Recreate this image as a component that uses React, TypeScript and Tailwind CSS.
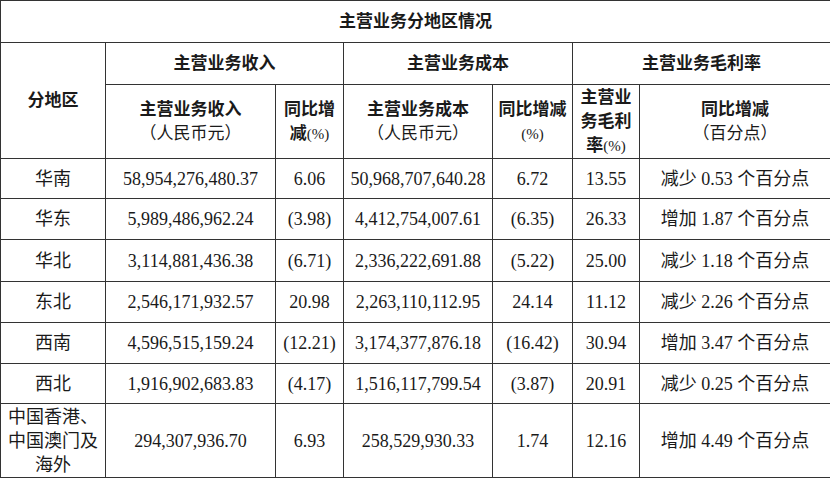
const rows: [string, string, string, string, string, string, string][] = [
  ["华南", "58,954,276,480.37", "6.06", "50,968,707,640.28", "6.72", "13.55", "减少 0.53 个百分点"],
  ["华东", "5,989,486,962.24", "(3.98)", "4,412,754,007.61", "(6.35)", "26.33", "增加 1.87 个百分点"],
  ["华北", "3,114,881,436.38", "(6.71)", "2,336,222,691.88", "(5.22)", "25.00", "减少 1.18 个百分点"],
  ["东北", "2,546,171,932.57", "20.98", "2,263,110,112.95", "24.14", "11.12", "减少 2.26 个百分点"],
  ["西南", "4,596,515,159.24", "(12.21)", "3,174,377,876.18", "(16.42)", "30.94", "增加 3.47 个百分点"],
  ["西北", "1,916,902,683.83", "(4.17)", "1,516,117,799.54", "(3.87)", "20.91", "减少 0.25 个百分点"],
];

const rowHeights = ["h-[40px]", "h-[41px]", "h-[42px]", "h-[41px]", "h-[41px]", "h-[40px]"];

const cell = "border border-[#333] text-center align-middle p-0";
const bodyCell = `${cell} text-[18px]`;

function Pct() {
  return <span className="font-normal text-[15px]">(%)</span>;
}

export default function App() {
  return (
    <div className="w-[830px] h-[478px] bg-white overflow-hidden">
      <table
        className="table-fixed border-collapse w-[830px] text-[#1a1a1a] text-[17px] leading-[24px]"
        style={{ fontFamily: '"Liberation Serif", "Noto Sans CJK SC", serif' }}
      >
        <colgroup>
          <col className="w-[105px]" />
          <col className="w-[170px]" />
          <col className="w-[68px]" />
          <col className="w-[149px]" />
          <col className="w-[80px]" />
          <col className="w-[67px]" />
          <col className="w-[191px]" />
        </colgroup>
        <thead className="font-bold">
          <tr className="h-[42px]">
            <th colSpan={7} className={cell}>主营业务分地区情况</th>
          </tr>
          <tr className="h-[42px]">
            <th rowSpan={2} className={cell}>分地区</th>
            <th colSpan={2} className={cell}>主营业务收入</th>
            <th colSpan={2} className={cell}>主营业务成本</th>
            <th colSpan={2} className={cell}>主营业务毛利率</th>
          </tr>
          <tr className="h-[74px]">
            <th className={cell}>
              主营业务收入
              <br />
              <span className="font-normal">（人民币元）</span>
            </th>
            <th className={cell}>
              同比增
              <br />
              减<Pct />
            </th>
            <th className={cell}>
              主营业务成本
              <br />
              <span className="font-normal">（人民币元）</span>
            </th>
            <th className={cell}>
              同比增减
              <br />
              <Pct />
            </th>
            <th className={cell}>
              主营业
              <br />
              务毛利
              <br />
              率<Pct />
            </th>
            <th className={cell}>
              同比增减
              <br />
              <span className="font-normal">（百分点）</span>
            </th>
          </tr>
        </thead>
        <tbody>
          {rows.map((r, i) => (
            <tr key={r[0]} className={rowHeights[i]}>
              {r.map((v, j) => (
                <td key={j} className={bodyCell}>{v}</td>
              ))}
            </tr>
          ))}
          <tr className="h-[74px]">
            <td className={`${bodyCell} leading-[24px]`}>
              <div className="flex flex-col items-center">
                <span>中国香港、</span>
                <span>中国澳门及</span>
                <span>海外</span>
              </div>
            </td>
            <td className={bodyCell}>294,307,936.70</td>
            <td className={bodyCell}>6.93</td>
            <td className={bodyCell}>258,529,930.33</td>
            <td className={bodyCell}>1.74</td>
            <td className={bodyCell}>12.16</td>
            <td className={bodyCell}>增加 4.49 个百分点</td>
          </tr>
        </tbody>
      </table>
    </div>
  );
}
